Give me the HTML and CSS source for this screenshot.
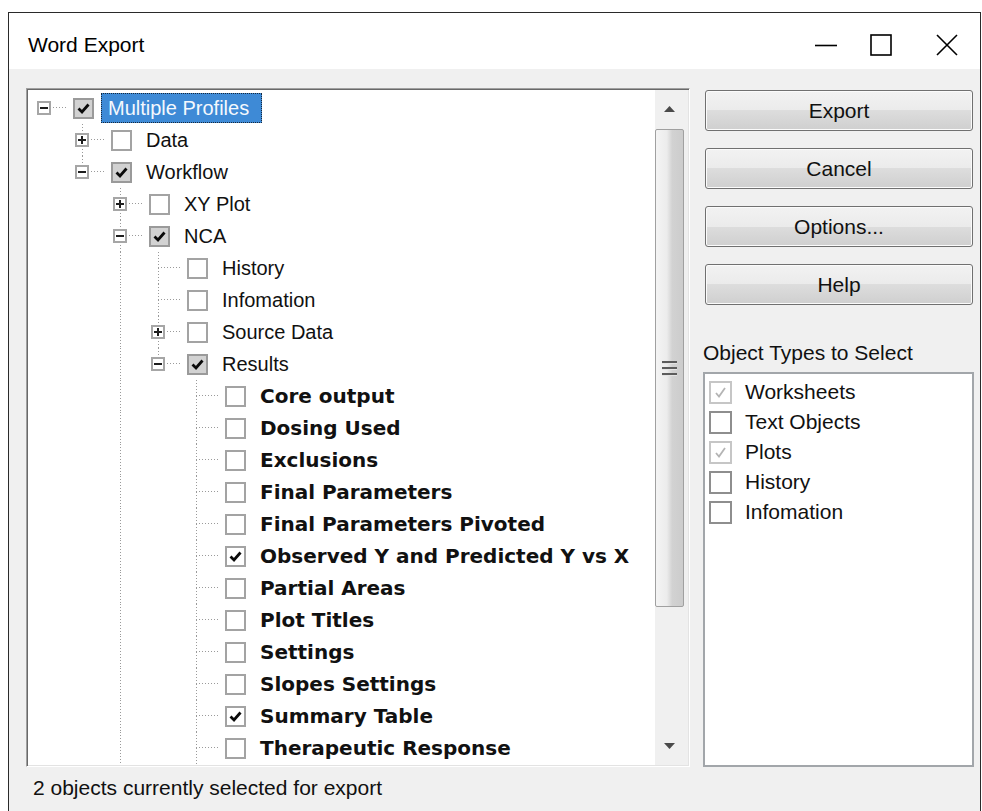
FILE: index.html
```html
<!DOCTYPE html>
<html lang="en">
<head>
<meta charset="utf-8">
<title>Word Export</title>
<link rel="stylesheet" href="styles.css">
</head>
<body>
<div class="window">
  <header class="titlebar">
    <span class="title">Word Export</span>
    <div class="caption">
      <span class="cap-btn min"><svg width="22" height="22" viewBox="0 0 22 22"><path d="M0 11.5H22" stroke="#000" stroke-width="1.6"/></svg></span>
      <span class="cap-btn"><svg width="22" height="22" viewBox="0 0 22 22"><rect x="1" y="1" width="20" height="20" fill="none" stroke="#000" stroke-width="1.6"/></svg></span>
      <span class="cap-btn"><svg width="22" height="22" viewBox="0 0 22 22"><path d="M1 1L21 21M21 1L1 21" stroke="#000" stroke-width="1.6"/></svg></span>
    </div>
  </header>

  <main class="client">
    <div class="content">
      <div class="tree">
        <div class="tree-rows">
          <div class="row">
            <span class="own"><span class="exp"></span></span>
            <span class="box on"><svg viewBox="0 0 17 17"><path d="M3.5 8.5L7 12L13.5 4.5"/></svg></span>
            <span class="label sel">Multiple Profiles</span>
          </div>
          <div class="row">
            <span class="cell"></span>
            <span class="own up down"><span class="exp plus"></span></span>
            <span class="box"></span>
            <span class="label">Data</span>
          </div>
          <div class="row">
            <span class="cell"></span>
            <span class="own up"><span class="exp"></span></span>
            <span class="box on"><svg viewBox="0 0 17 17"><path d="M3.5 8.5L7 12L13.5 4.5"/></svg></span>
            <span class="label">Workflow</span>
          </div>
          <div class="row">
            <span class="cell"></span><span class="cell"></span>
            <span class="own up down"><span class="exp plus"></span></span>
            <span class="box"></span>
            <span class="label">XY Plot</span>
          </div>
          <div class="row">
            <span class="cell"></span><span class="cell"></span>
            <span class="own up down"><span class="exp"></span></span>
            <span class="box on"><svg viewBox="0 0 17 17"><path d="M3.5 8.5L7 12L13.5 4.5"/></svg></span>
            <span class="label">NCA</span>
          </div>
          <div class="row">
            <span class="cell"></span><span class="cell"></span><span class="cell pipe"></span>
            <span class="own up down"></span>
            <span class="box"></span>
            <span class="label">History</span>
          </div>
          <div class="row">
            <span class="cell"></span><span class="cell"></span><span class="cell pipe"></span>
            <span class="own up down"></span>
            <span class="box"></span>
            <span class="label">Infomation</span>
          </div>
          <div class="row">
            <span class="cell"></span><span class="cell"></span><span class="cell pipe"></span>
            <span class="own up down"><span class="exp plus"></span></span>
            <span class="box"></span>
            <span class="label">Source Data</span>
          </div>
          <div class="row">
            <span class="cell"></span><span class="cell"></span><span class="cell pipe"></span>
            <span class="own up"><span class="exp"></span></span>
            <span class="box on"><svg viewBox="0 0 17 17"><path d="M3.5 8.5L7 12L13.5 4.5"/></svg></span>
            <span class="label">Results</span>
          </div>
          <div class="row">
            <span class="cell"></span><span class="cell"></span><span class="cell pipe"></span><span class="cell"></span>
            <span class="own up down"></span>
            <span class="box"></span>
            <span class="label b">Core output</span>
          </div>
          <div class="row">
            <span class="cell"></span><span class="cell"></span><span class="cell pipe"></span><span class="cell"></span>
            <span class="own up down"></span>
            <span class="box"></span>
            <span class="label b">Dosing Used</span>
          </div>
          <div class="row">
            <span class="cell"></span><span class="cell"></span><span class="cell pipe"></span><span class="cell"></span>
            <span class="own up down"></span>
            <span class="box"></span>
            <span class="label b">Exclusions</span>
          </div>
          <div class="row">
            <span class="cell"></span><span class="cell"></span><span class="cell pipe"></span><span class="cell"></span>
            <span class="own up down"></span>
            <span class="box"></span>
            <span class="label b">Final Parameters</span>
          </div>
          <div class="row">
            <span class="cell"></span><span class="cell"></span><span class="cell pipe"></span><span class="cell"></span>
            <span class="own up down"></span>
            <span class="box"></span>
            <span class="label b">Final Parameters Pivoted</span>
          </div>
          <div class="row">
            <span class="cell"></span><span class="cell"></span><span class="cell pipe"></span><span class="cell"></span>
            <span class="own up down"></span>
            <span class="box white-on"><svg viewBox="0 0 17 17"><path d="M3.5 8.5L7 12L13.5 4.5"/></svg></span>
            <span class="label b">Observed Y and Predicted Y vs X</span>
          </div>
          <div class="row">
            <span class="cell"></span><span class="cell"></span><span class="cell pipe"></span><span class="cell"></span>
            <span class="own up down"></span>
            <span class="box"></span>
            <span class="label b">Partial Areas</span>
          </div>
          <div class="row">
            <span class="cell"></span><span class="cell"></span><span class="cell pipe"></span><span class="cell"></span>
            <span class="own up down"></span>
            <span class="box"></span>
            <span class="label b">Plot Titles</span>
          </div>
          <div class="row">
            <span class="cell"></span><span class="cell"></span><span class="cell pipe"></span><span class="cell"></span>
            <span class="own up down"></span>
            <span class="box"></span>
            <span class="label b">Settings</span>
          </div>
          <div class="row">
            <span class="cell"></span><span class="cell"></span><span class="cell pipe"></span><span class="cell"></span>
            <span class="own up down"></span>
            <span class="box"></span>
            <span class="label b">Slopes Settings</span>
          </div>
          <div class="row">
            <span class="cell"></span><span class="cell"></span><span class="cell pipe"></span><span class="cell"></span>
            <span class="own up down"></span>
            <span class="box white-on"><svg viewBox="0 0 17 17"><path d="M3.5 8.5L7 12L13.5 4.5"/></svg></span>
            <span class="label b">Summary Table</span>
          </div>
          <div class="row">
            <span class="cell"></span><span class="cell"></span><span class="cell pipe"></span><span class="cell"></span>
            <span class="own up down"></span>
            <span class="box"></span>
            <span class="label b">Therapeutic Response</span>
          </div>
        </div>

        <div class="vscroll">
          <div class="sb-arrow"><svg width="11" height="6" viewBox="0 0 11 6"><path d="M5.5 0L11 6H0Z" fill="#4a4a4a"/></svg></div>
          <div class="sb-thumb"><span class="grip"></span></div>
          <div class="sb-track"></div>
          <div class="sb-arrow"><svg width="11" height="6" viewBox="0 0 11 6"><path d="M0 0H11L5.5 6Z" fill="#4a4a4a"/></svg></div>
        </div>
      </div>

      <aside class="side">
        <div class="buttons">
          <button class="btn">Export</button>
          <button class="btn">Cancel</button>
          <button class="btn">Options...</button>
          <button class="btn">Help</button>
        </div>
        <div class="group-label">Object Types to Select</div>
        <div class="listbox">
          <div class="item"><span class="cb dis"><svg viewBox="0 0 19 19"><path d="M5 10L8 13.5L14 5"/></svg></span>Worksheets</div>
          <div class="item"><span class="cb"></span>Text Objects</div>
          <div class="item"><span class="cb dis"><svg viewBox="0 0 19 19"><path d="M5 10L8 13.5L14 5"/></svg></span>Plots</div>
          <div class="item"><span class="cb"></span>History</div>
          <div class="item"><span class="cb"></span>Infomation</div>
        </div>
      </aside>
    </div>
    <div class="status">2 objects currently selected for export</div>
  </main>
</div>
</body>
</html>
```

FILE: styles.css
```css
:root {
  --dot: #9a9a9a;
  --vdots: repeating-linear-gradient(to bottom, var(--dot) 0 1px, transparent 1px 3px);
  --hdots: repeating-linear-gradient(to right, var(--dot) 0 1px, transparent 1px 3px);
}

html, body {
  margin: 0;
  height: 811px;
  overflow: hidden;
  background: #ffffff;
  font-family: "Liberation Sans", Arial, sans-serif;
  color: #111;
}

/* dialog frame */
.window {
  margin: 12px 0 0 8px;
  width: 973px;
  height: 799px;
  box-sizing: border-box;
  border: 1px solid #2a2a2a;
  border-bottom: none;
  display: flex;
  flex-direction: column;
  background: #f0f0f0;
}

.titlebar {
  flex: none;
  height: 56px;
  background: #ffffff;
  display: flex;
  align-items: center;
}

.title {
  flex: 1;
  padding: 8px 0 0 19px;
  font-size: 21px;
  color: #000;
}

.caption {
  display: flex;
  height: 100%;
}

.cap-btn {
  width: 66px;
  display: flex;
  align-items: center;
  justify-content: center;
  padding-top: 8px;
}

.cap-btn.min {
  width: 44px;
}

/* client area */
.client {
  flex: 1;
  display: flex;
  flex-direction: column;
  padding: 19px 5px 0 17px;
}

.content {
  display: flex;
  gap: 13px;
  height: 679px;
}

/* tree view */
.tree {
  flex: none;
  width: 664px;
  box-sizing: border-box;
  border: 1px solid;
  border-color: #a0a0a0 #ffffff #ffffff #a0a0a0;
  box-shadow: inset 1px 1px 0 #696969, inset -1px -1px 0 #e3e3e3;
  padding: 1px;
  display: flex;
  background: #fff;
}

.tree-rows {
  flex: 1;
  padding-top: 2px;
  overflow: hidden;
  background: #fff;
}

.row {
  height: 32px;
  display: flex;
  align-items: center;
}

.cell {
  flex: none;
  width: 38px;
  height: 32px;
}

.cell.pipe {
  background-image: var(--vdots);
  background-size: 1px 100%;
  background-position: 16px 0;
  background-repeat: no-repeat;
}

.own {
  flex: none;
  width: 45px;
  height: 32px;
  display: flex;
  align-items: center;
  background-image: var(--up, none), var(--down, none), var(--hdots);
  background-size: 1px 16px, 1px 16px, 24px 1px;
  background-position: 16px 0, 16px 16px, 16px 15px;
  background-repeat: no-repeat;
}

.own.up { --up: var(--vdots); }
.own.down { --down: var(--vdots); }

/* expand / collapse glyph */
.exp {
  width: 14px;
  height: 14px;
  margin-left: 9px;
  box-sizing: border-box;
  border: 2px solid #a6a6a6;
  background: #fff linear-gradient(#1e1e1e, #1e1e1e) center / 8px 2px no-repeat;
}

.exp.plus {
  background-image: linear-gradient(#1e1e1e, #1e1e1e), linear-gradient(#1e1e1e, #1e1e1e);
  background-size: 8px 2px, 2px 8px;
  background-position: center, center;
  background-repeat: no-repeat;
}

.box {
  flex: none;
  width: 21px;
  height: 21px;
  box-sizing: border-box;
  border: 2px solid #a3a3a3;
  background: #fff;
  display: flex;
}

.box.on {
  background: #d2d2d2;
  border-color: #9a9a9a;
}

.box svg {
  width: 100%;
  height: 100%;
}

.box svg path {
  fill: none;
  stroke: #0a0a0a;
  stroke-width: 2.8;
}

.label {
  margin-left: 7px;
  padding: 0 6px;
  line-height: 28px;
  border: 1px solid transparent;
  white-space: nowrap;
  font-size: 20px;
  color: #111;
}

.label.b {
  font-family: "DejaVu Sans", sans-serif;
  font-weight: bold;
  font-size: 20px;
}

.label.sel {
  background: #3e8ad6;
  color: #f4f8fd;
  border: 1px dotted #16283c;
  padding-right: 12px;
}

/* vertical scrollbar */
.vscroll {
  flex: none;
  width: 33px;
  background: #f0f0f0;
  display: flex;
  flex-direction: column;
}

.sb-arrow {
  flex: none;
  height: 38px;
  display: flex;
  align-items: center;
  justify-content: center;
  padding-right: 4px;
}

.sb-thumb {
  flex: none;
  height: 478px;
  margin: 1px 4px 0 0;
  box-sizing: border-box;
  border: 1px solid #a0a0a0;
  border-radius: 2px;
  background: linear-gradient(to right, #f4f4f4 0%, #ececec 40%, #d2d2d2 60%, #cccccc 100%);
  display: flex;
  align-items: center;
  justify-content: center;
}

.grip {
  width: 15px;
  height: 15px;
  background: repeating-linear-gradient(to bottom, #5c5c5c 0 2px, #e4e4e4 2px 3px, transparent 3px 6px);
}

.sb-track {
  flex: 1;
}

/* right column */
.side {
  flex: none;
  width: 271px;
  display: flex;
  flex-direction: column;
}

.buttons {
  display: flex;
  flex-direction: column;
  gap: 17px;
  padding: 2px 1px 0 2px;
}

.btn {
  height: 41px;
  border: 1px solid #707070;
  border-radius: 3px;
  box-shadow: inset 0 0 0 1px #fbfbfb;
  background: linear-gradient(#f2f2f2 0%, #ebebeb 50%, #dddddd 50%, #cfcfcf 100%);
  font-family: "Liberation Sans", Arial, sans-serif;
  font-size: 21px;
  color: #111;
  padding: 0;
}

.group-label {
  margin-top: 36px;
  font-size: 21px;
  line-height: 24px;
  color: #111;
}

.listbox {
  flex: 1;
  margin-top: 7px;
  border: 2px solid #a2a6aa;
  background: #fff;
  padding: 3px 0 0 4px;
}

.item {
  height: 30px;
  display: flex;
  align-items: center;
  font-size: 21px;
  color: #111;
}

.cb {
  flex: none;
  width: 23px;
  height: 23px;
  margin-right: 13px;
  box-sizing: border-box;
  border: 2px solid #8e8e8e;
  background: #fff;
  display: flex;
}

.cb.dis {
  border-color: #c6c6c6;
}

.cb svg {
  width: 100%;
  height: 100%;
}

.cb svg path {
  fill: none;
  stroke: #b4b4b4;
  stroke-width: 1.8;
}

/* status line */
.status {
  margin-top: 9px;
  padding-left: 7px;
  font-size: 21px;
  line-height: 24px;
  color: #111;
}
```
